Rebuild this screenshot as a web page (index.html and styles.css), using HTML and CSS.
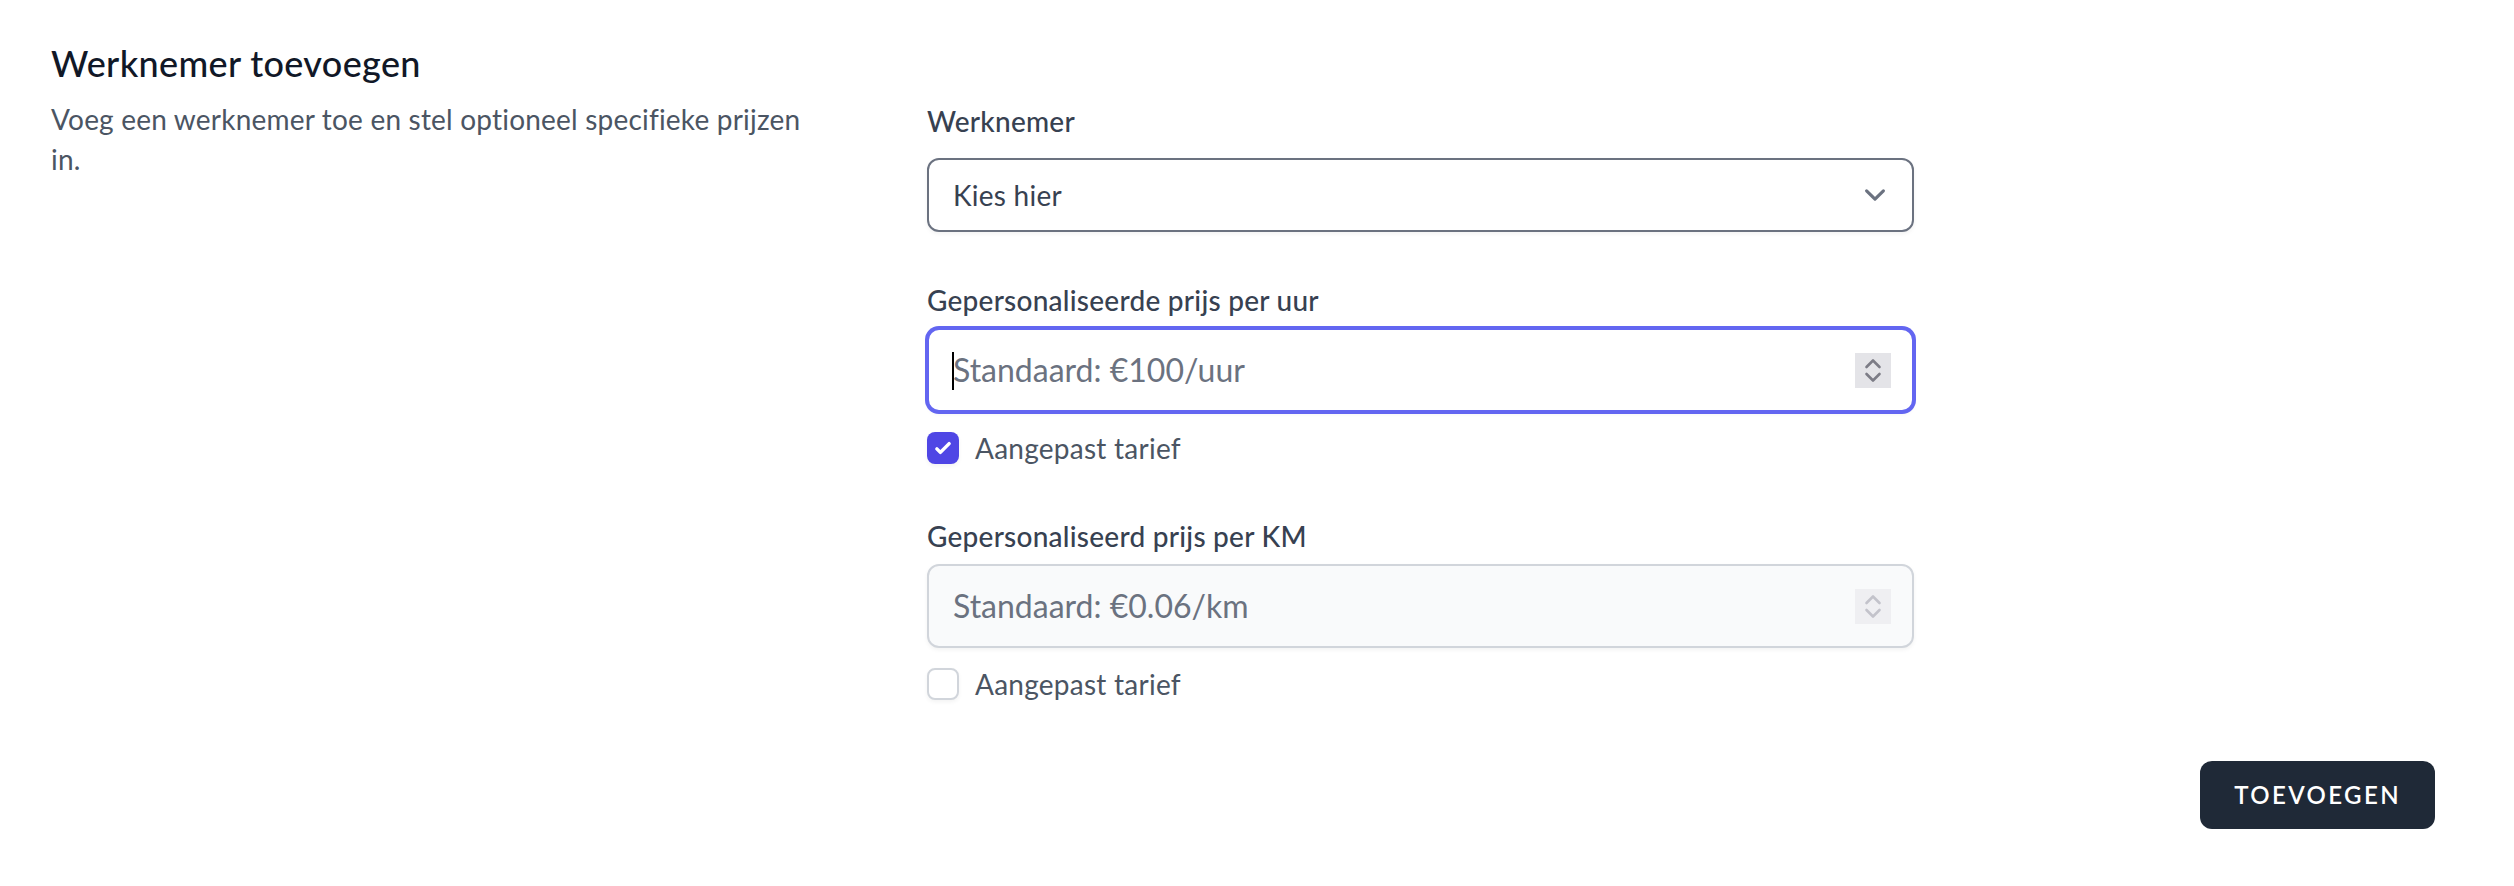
FILE: index.html
```html
<!DOCTYPE html>
<html>
  <head>
    <meta charset="utf-8">
    <title>Werknemer toevoegen</title>
    <link rel="stylesheet" href="styles.css">
  </head>
  <body>
    <div class="section">

      <div class="section-info">
        <h3 class="section-title">Werknemer toevoegen</h3>
        <p class="section-desc">Voeg een werknemer toe en stel optioneel specifieke prijzen in.</p>
      </div>

      <div class="section-body">
        <form class="form" id="form_addEmployee">

          <div class="field">
            <label class="label" for="sel_employee">Werknemer</label>
            <div class="select-wrap">
              <select class="select" id="sel_employee">
                <option>Kies hier</option>
              </select>
              <svg class="select-chevron" viewBox="0 0 20 20" fill="none">
                <path d="M6 8l4 4 4-4" stroke="#6b7280" stroke-width="1.5" stroke-linecap="round" stroke-linejoin="round"/>
              </svg>
            </div>
          </div>

          <div class="field">
            <label class="label" for="in_hourPrice">Gepersonaliseerde prijs per uur</label>
            <div class="num-box focused">
              <input class="num-input" id="in_hourPrice" type="text" placeholder="Standaard: €100/uur">
              <span class="caret"></span>
              <svg class="spin" viewBox="0 0 36 35">
                <rect width="36" height="35" fill="#e4e4e8"/>
                <path d="M11.5 14l6.5-6.5 6.5 6.5M11.5 21l6.5 6.5 6.5-6.5" fill="none" stroke="#7c7c86" stroke-width="2.6" stroke-linecap="round" stroke-linejoin="round"/>
              </svg>
            </div>
            <label class="check-row">
              <span class="check on">
                <svg viewBox="0 0 16 16"><path fill="#fff" d="M12.207 4.793a1 1 0 010 1.414l-5 5a1 1 0 01-1.414 0l-2-2a1 1 0 011.414-1.414L6.5 9.086l4.293-4.293a1 1 0 011.414 0z"/></svg>
              </span>
              <span class="check-text">Aangepast tarief</span>
            </label>
          </div>

          <div class="field">
            <label class="label" for="in_kmPrice">Gepersonaliseerd prijs per KM</label>
            <div class="num-box disabled">
              <input class="num-input" id="in_kmPrice" type="text" placeholder="Standaard: €0.06/km" disabled>
              <svg class="spin" viewBox="0 0 36 35">
                <rect width="36" height="35" fill="#efeff2"/>
                <path d="M11.5 14l6.5-6.5 6.5 6.5M11.5 21l6.5 6.5 6.5-6.5" fill="none" stroke="#c3c3cb" stroke-width="2.6" stroke-linecap="round" stroke-linejoin="round"/>
              </svg>
            </div>
            <label class="check-row">
              <span class="check"></span>
              <span class="check-text">Aangepast tarief</span>
            </label>
          </div>

        </form>

        <div class="actions">
          <button class="btn" type="button">Toevoegen</button>
        </div>
      </div>

    </div>
  </body>
</html>
```

FILE: styles.css
```css
      body {
        margin: 0;
        background-color: #ffffff;
        font-family: Lato, "Open Sans", sans-serif;
        color: #111827;
      }

      .section {
        display: grid;
        grid-template-columns: repeat(3, 1fr);
        column-gap: 48px;
        padding: 35px 27px 0 51px;
      }

      .section-info {
        grid-column: span 1;
      }

      .section-title {
        margin: 0;
        font-size: 36px;
        line-height: 56px;
        font-weight: 500;
        letter-spacing: 0.35px;
        color: #111827;
      }

      .section-desc {
        max-width: 770px;
        margin: 8px 0 0 0;
        font-size: 28px;
        line-height: 40px;
        letter-spacing: 0.2px;
        color: #4b5563;
      }

      .section-body {
        grid-column: span 2;
      }

      .form {
        display: flex;
        flex-direction: column;
        gap: 48px;
        padding: 66px 48px 0 48px;
      }

      .field {
        display: flex;
        flex-direction: column;
        max-width: 987px;
      }

      .label {
        display: block;
        font-size: 28px;
        line-height: 40px;
        font-weight: 500;
        letter-spacing: 0.25px;
        color: #374151;
      }

      .select-wrap {
        position: relative;
        margin-top: 17px;
      }

      .select {
        appearance: none;
        -webkit-appearance: none;
        display: block;
        width: 100%;
        box-sizing: border-box;
        margin: 0;
        padding: 15px 80px 15px 24px;
        border: 2px solid #6b7280;
        border-radius: 12px;
        background-color: #ffffff;
        box-shadow: 0 2px 4px 0 rgba(0, 0, 0, 0.05);
        font-family: inherit;
        font-size: 28px;
        line-height: 40px;
        letter-spacing: 0.25px;
        color: #374151;
      }

      .select-chevron {
        position: absolute;
        right: 18px;
        top: 50%;
        width: 42px;
        height: 42px;
        margin-top: -21px;
        pointer-events: none;
      }

      .num-box {
        position: relative;
        display: flex;
        align-items: center;
        margin-top: 8px;
        border: 2px solid #d1d5db;
        border-radius: 12px;
        background-color: #ffffff;
        box-shadow: 0 2px 4px 0 rgba(0, 0, 0, 0.05);
      }

      .num-box.focused {
        border-color: #6366f1;
        box-shadow: 0 0 0 2px #6366f1, 0 2px 4px 0 rgba(0, 0, 0, 0.05);
      }

      .num-box.disabled {
        background-color: #f9fafb;
      }

      .num-input {
        flex: 1;
        min-width: 0;
        margin: 0;
        padding: 16px 0 16px 24px;
        border: none;
        outline: none;
        background: transparent;
        font-family: inherit;
        font-size: 32px;
        line-height: 48px;
        color: #111827;
      }

      .num-input::placeholder {
        color: #6b7280;
        opacity: 1;
      }

      .caret {
        position: absolute;
        left: 23px;
        top: 22px;
        width: 2px;
        height: 38px;
        background-color: #000000;
      }

      .spin {
        flex: none;
        width: 36px;
        height: 35px;
        margin-right: 21px;
      }

      .check-row {
        display: flex;
        align-items: center;
        margin-top: 16px;
        height: 40px;
      }

      .check {
        display: flex;
        align-items: center;
        justify-content: center;
        width: 32px;
        height: 32px;
        box-sizing: border-box;
        border: 2px solid #d1d5db;
        border-radius: 8px;
        background-color: #ffffff;
        box-shadow: 0 2px 4px 0 rgba(0, 0, 0, 0.05);
      }

      .check.on {
        border-color: transparent;
        background-color: #4f46e5;
      }

      .check svg {
        width: 34px;
        height: 34px;
      }

      .check-text {
        margin-left: 16px;
        font-size: 28px;
        line-height: 40px;
        letter-spacing: 0.25px;
        color: #4b5563;
      }

      .actions {
        display: flex;
        justify-content: flex-end;
        padding: 57px 52px 0 0;
      }

      .btn {
        display: inline-flex;
        align-items: center;
        padding: 16px 32px;
        border: 2px solid transparent;
        border-radius: 12px;
        background-color: #1f2937;
        font-family: inherit;
        font-size: 24px;
        line-height: 32px;
        font-weight: 600;
        letter-spacing: 0.1em;
        text-transform: uppercase;
        color: #ffffff;
      }
```
